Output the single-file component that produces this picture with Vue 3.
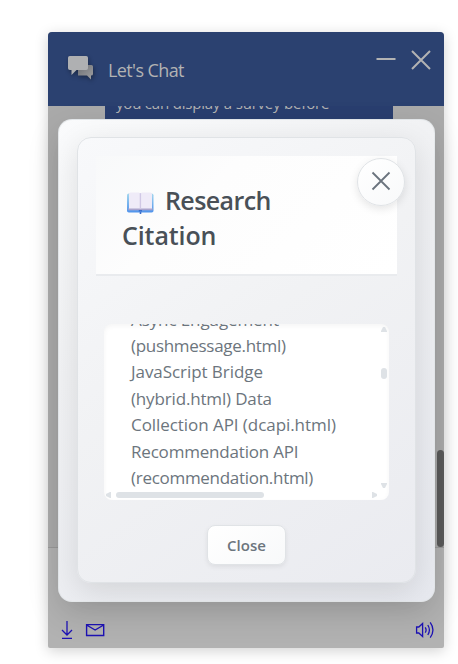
<script setup>
const lines = [
  { text: 'Async Engagement', spacing: -0.1 },
  { text: '(pushmessage.html)', spacing: -0.3 },
  { text: 'JavaScript Bridge', spacing: -0.06 },
  { text: '(hybrid.html) Data', spacing: -0.16 },
  { text: 'Collection API (dcapi.html)', spacing: -0.06 },
  { text: 'Recommendation API', spacing: -0.19 },
  { text: '(recommendation.html)', spacing: -0.29 },
]
</script>

<template>
  <main class="page">
    <section class="chat">
      <header class="chat-head">
        <svg class="logo" width="30" height="32" viewBox="0 0 30 32">
          <defs>
            <linearGradient id="back" x1="0" y1="0" x2="1" y2="1">
              <stop offset="0" stop-color="#6d6f74" /><stop offset="1" stop-color="#a0a0a2" />
            </linearGradient>
          </defs>
          <path d="M10 11H23.5Q25 11 25 12.5V20Q25 21.5 23 21.5V25.5L19 21.5H10Z" fill="url(#back)" />
          <path d="M1.8 2H18.2Q20 2 20 3.8V14.2Q20 16 18.2 16H8.5L3.5 21V16H1.8Q0 16 0 14.2V3.8Q0 2 1.8 2Z" fill="#afb0b2" />
        </svg>
        <span class="chat-title">Let's Chat</span>
        <svg class="controls" width="56" height="20" viewBox="0 0 56 20">
          <path d="M0.5 9H19.5" stroke="#b3b3b3" stroke-width="2" />
          <path d="M36 1L54 19M54 1L36 19" stroke="#b3b3b3" stroke-width="2" />
        </svg>
      </header>
      <div class="messages">
        <div class="bubble"><span>you can display a survey before</span></div>
        <div class="page-thumb"></div>
      </div>
      <footer class="chat-foot">
        <svg width="12" height="20" viewBox="0 0 12 20" fill="none" stroke="#1d12b5" stroke-width="1.3">
          <path d="M6 0V14M1 9L6 14L11 9M1 17.4H11" />
        </svg>
        <svg class="mail" width="20" height="14" viewBox="0 0 20 14" fill="none" stroke="#1d12b5" stroke-width="1.4">
          <path d="M1.6 1.6H18.7V12.5H1.6ZM1.6 2L10.1 7L18.7 2" />
        </svg>
        <svg class="sound" width="20" height="18" viewBox="0 0 20 18" fill="none" stroke="#1d12b5" stroke-width="1.3">
          <path d="M1.6 6H3.8L7.6 2.5V15.5L3.8 12H1.6ZM10.2 6.3Q12 9 10.2 11.7M12.8 4Q16 9 12.8 14M15.2 1.4Q20.7 9 15.2 16.6" />
        </svg>
      </footer>
    </section>

    <div class="dialog">
      <section class="panel">
        <button class="x-button" aria-label="Close dialog">
          <svg width="20" height="20" viewBox="0 0 20 20">
            <path d="M1.5 1.5L18.5 18.5M18.5 1.5L1.5 18.5" stroke="#6a737d" stroke-width="1.8" />
          </svg>
        </button>
        <header class="panel-head">
          <h1>
            <svg class="book" width="28" height="22" viewBox="0 0 28 22">
              <defs>
                <linearGradient id="cover" x1="0" y1="0" x2="0" y2="1">
                  <stop offset="0" stop-color="#a5d8ef" /><stop offset="1" stop-color="#4f93ec" />
                </linearGradient>
              </defs>
              <rect x="1" y="1.5" width="26.5" height="19" rx="1.8" fill="url(#cover)" />
              <path d="M2.5 16H26.5V18.3H2.5Z" fill="#aaa4cd" />
              <path d="M3 2Q3 0.5 4.5 0.5H13L14.4 1.5L15.8 0.5H24.5Q26 0.5 26 2V16.5H3Z" fill="#efebf8" />
              <path d="M13.7 1.2H15.1V17H13.7Z" fill="#d0c8e5" />
              <path d="M12.8 18H16V19.5H12.8ZM13.7 20H15.3V22H13.7Z" fill="#3c6fca" />
            </svg>
            <span class="first">Research</span><br /><span class="second">Citation</span>
          </h1>
        </header>
        <div class="reader">
          <div class="copy">
            <p v-for="line in lines" :key="line.text" :style="{ letterSpacing: line.spacing + 'px' }">{{ line.text }}</p>
          </div>
          <div class="v-scroll">
            <svg width="6" height="5" viewBox="0 0 6 5"><path d="M2 0H4L6 4V5H0V4Z" fill="#dee2e6" /></svg>
            <i></i>
            <svg width="6" height="5" viewBox="0 0 6 5"><path d="M0 0H6V1L4 5H2L0 1Z" fill="#dee2e6" /></svg>
          </div>
          <div class="h-scroll">
            <svg width="5" height="6" viewBox="0 0 5 6"><path d="M5 0V6H4L0 4V2L4 0Z" fill="#dee2e6" /></svg>
            <i></i>
            <svg width="5" height="6" viewBox="0 0 5 6"><path d="M0 0V6H1L5 4V2L1 0Z" fill="#dee2e6" /></svg>
          </div>
        </div>
        <button class="close">Close</button>
      </section>
    </div>
  </main>
</template>

<style>
body { margin: 0; background: #fff; }
</style>

<style scoped>
* { box-sizing: border-box; }
.page {
  position: relative; width: 458px; height: 664px; padding: 32px 14px 16px 48px;
  overflow: hidden; background: #fff; font-family: "Open Sans", "Noto Sans", sans-serif;
}
.chat {
  width: 396px; height: 616px; display: flex; flex-direction: column; overflow: hidden;
  background: #b2b2b2; border-radius: 4px 4px 2px 2px;
  box-shadow: 0 3px 14px rgba(0,0,0,.18);
}
.chat-head { height: 74px; flex: none; display: flex; background: #2b4170; }
.logo { margin: 22px 0 0 20px; filter: drop-shadow(1px 2px 2px rgba(0,0,0,.35)); }
.chat-title { margin: 25px 0 0 10px; font-size: 18px; line-height: 26px; letter-spacing: -.6px; color: #b3b3b3; }
.controls { margin: 18px 12px 0 auto; }
.messages { position: relative; height: 442px; flex: none; overflow: hidden; border-bottom: 1px solid #999; background: #aaa; padding-left: 57px; }
.bubble { width: 288px; height: 60px; padding-left: 11px; background: #293e6f; color: #b3b3b3; font-size: 15px; letter-spacing: -.2px; line-height: 20px; white-space: nowrap; }
.bubble span { display: block; transform: translateY(-13px); }
.page-thumb { position: absolute; right: 0; top: 344px; width: 7px; height: 97px; border-radius: 4px; background: #5b5b5b; }
.chat-foot { flex: 1; display: flex; padding: 73px 9px 0 13px; align-items: flex-start; }
.mail { margin: 2px 0 0 12px; }
.sound { margin: 0 0 0 auto; }
.dialog {
  position: absolute; left: 58px; top: 119px; width: 377px; height: 483px; padding: 18px 19px;
  border: 1px solid rgba(222,226,230,.7); border-radius: 14px;
  background: linear-gradient(145deg, #fafbfc 0%, #f1f2f4 35%, #e7e9ef 100%);
  box-shadow: 0 12px 32px rgba(0,0,0,.14);
}
.panel {
  position: relative; width: 339px; height: 446px; margin: -1px 0 0 -1px; padding: 18px;
  display: flex; flex-direction: column; border: 1px solid #e0e3e6; border-radius: 14px;
  background: linear-gradient(145deg, #f8f9fb, #f1f2f4 45%, #eaebf0);
  box-shadow: 0 8px 30px rgba(0,0,0,.11);
}
.panel-head { height: 120px; flex: none; padding: 27px 26px; border-bottom: 2px solid #e9ebee; background: linear-gradient(135deg, #f8f9fa, #fdfdfd 35%, #fff); }
h1 { margin: 0; color: #495057; font-size: 25px; line-height: 35px; font-weight: 600; white-space: nowrap; }
.book { margin: 0 11px -4px 4px; }
.first { letter-spacing: -.6px; }
.second { letter-spacing: -.1px; }
.x-button {
  position: absolute; right: 10px; top: 20px; width: 48px; height: 48px; padding: 0;
  display: grid; place-items: center; border: 1px solid #e0e3e6; border-radius: 50%;
  background: linear-gradient(145deg, #fff, #f8f9fa); box-shadow: 0 3px 9px rgba(0,0,0,.1);
}
.x-button svg { margin-top: -2px; }
.reader {
  position: relative; width: 285px; height: 176px; margin: 48px 0 0 8px; flex: none;
  overflow: hidden; border-radius: 8px; background: #fff; box-shadow: inset 0 2px 5px rgba(0,0,0,.045);
}
.copy { padding-left: 27px; margin-top: -17.4px; color: #6c757d; font-size: 17px; line-height: 26.4px; white-space: nowrap; }
.copy p { margin: 0; }
.v-scroll { position: absolute; right: 2px; top: 3px; width: 6px; height: 161px; display: flex; flex-direction: column; align-items: center; }
.v-scroll i { width: 6px; height: 11px; margin: 36px 0 auto; border-radius: 3px; background: #dee2e6; }
.h-scroll { position: absolute; left: 2px; bottom: 2px; width: 271px; height: 6px; display: flex; align-items: center; }
.h-scroll i { width: 148px; height: 6px; margin: 0 auto 0 5px; border-radius: 3px; background: #dee2e6; }
.close {
  width: 79px; height: 40px; margin: 25px 0 0 111px; padding: 0; border: 1px solid #e0e3e6; border-radius: 8px;
  background: linear-gradient(145deg, #fff, #f8f9fa); color: #6c757d; box-shadow: 0 2px 5px rgba(0,0,0,.07);
  font: 600 15px/38px "Open Sans", sans-serif;
}
</style>
